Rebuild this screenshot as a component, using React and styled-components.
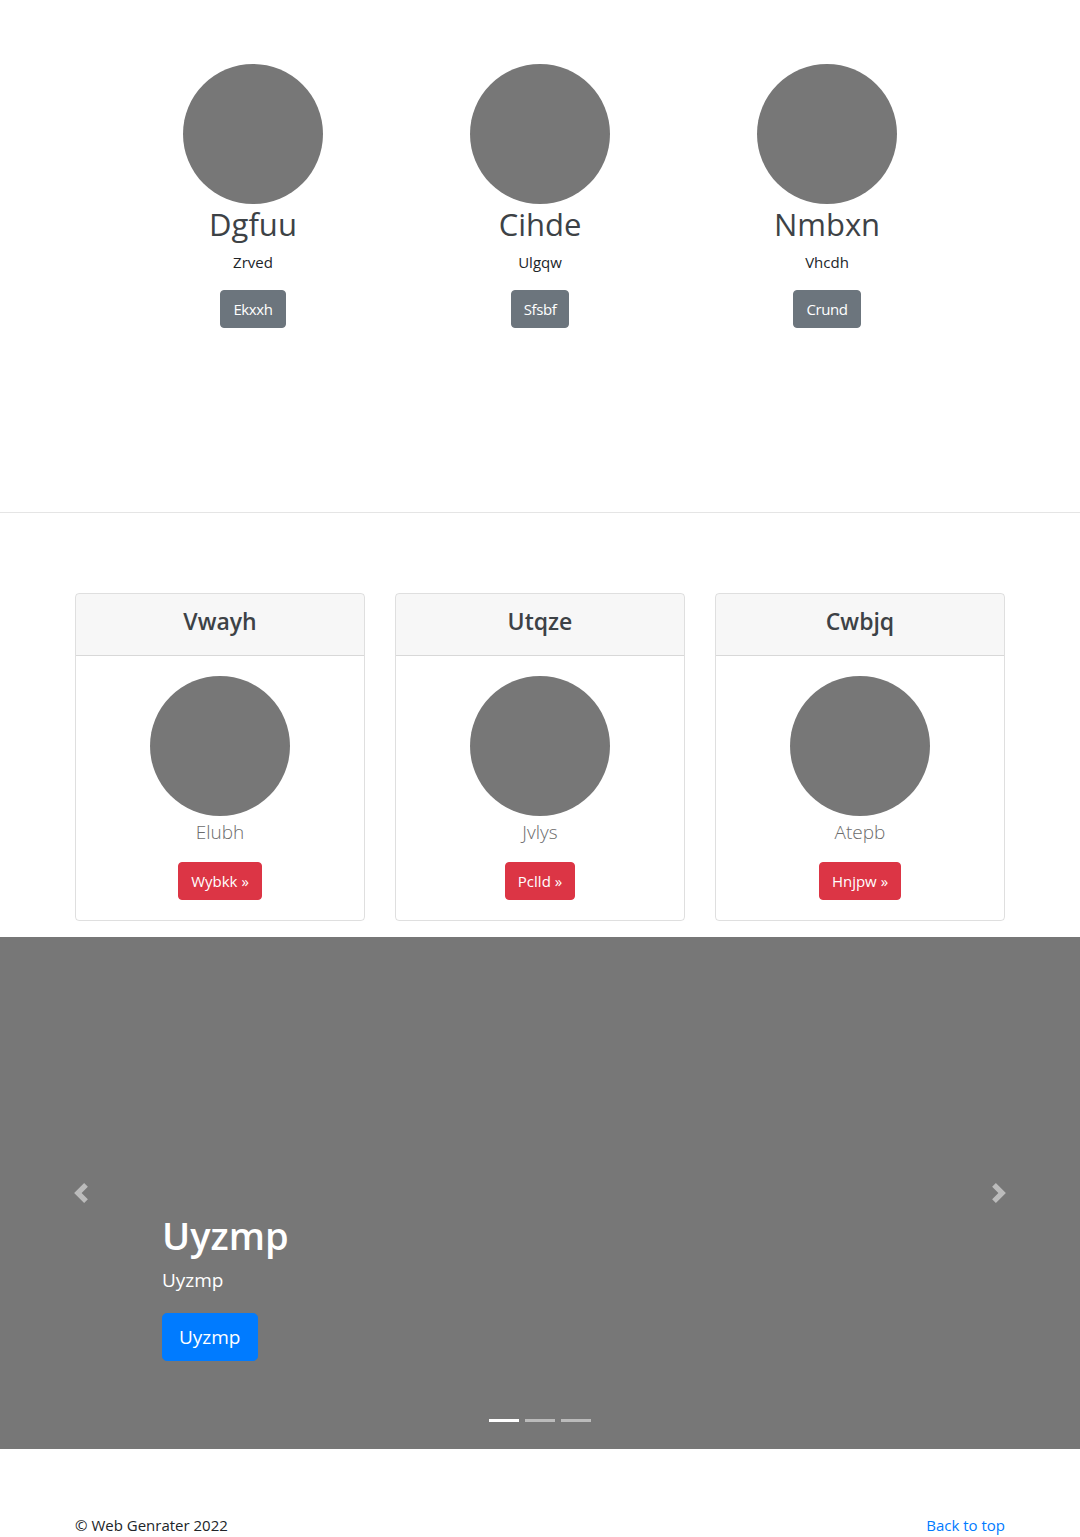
import styled, { createGlobalStyle } from 'styled-components'

const GlobalStyle = createGlobalStyle`
  body {
    margin: 0;
    font-family: 'Open Sans', 'Noto Sans', sans-serif;
    font-size: 16px;
    line-height: 1.5;
    color: #212529;
    background: #fff;
  }
  * {
    box-sizing: border-box;
  }
`

const features = [
  { title: 'Dgfuu', text: 'Zrved', btn: 'Ekxxh' },
  { title: 'Cihde', text: 'Ulgqw', btn: 'Sfsbf' },
  { title: 'Nmbxn', text: 'Vhcdh', btn: 'Crund' },
]

const cards = [
  { title: 'Vwayh', text: 'Elubh', btn: 'Wybkk' },
  { title: 'Utqze', text: 'Jvlys', btn: 'Pclld' },
  { title: 'Cwbjq', text: 'Atepb', btn: 'Hnjpw' },
]

const ChevronLeft = () => (
  <svg width='20' height='20' viewBox='0 0 8 8' fill='#fff'>
    <path d='M5.25 0l-4 4 4 4 1.5-1.5L4.25 4l2.5-2.5L5.25 0z' />
  </svg>
)

const ChevronRight = () => (
  <svg width='20' height='20' viewBox='0 0 8 8' fill='#fff'>
    <path d='M2.75 0l-1.5 1.5L3.75 4l-2.5 2.5L2.75 8l4-4-4-4z' />
  </svg>
)

const App = () => {
  return (
    <>
      <GlobalStyle />
      <FeatureSection>
        <FeatureRow>
          {features.map((f) => (
            <Feature key={f.title}>
              <Circle />
              <FeatureTitle>{f.title}</FeatureTitle>
              <FeatureText>{f.text}</FeatureText>
              <Button variant='secondary'>{f.btn}</Button>
            </Feature>
          ))}
        </FeatureRow>
      </FeatureSection>

      <CardSection>
        {cards.map((c) => (
          <Card key={c.title}>
            <CardHeader>
              <h4>{c.title}</h4>
            </CardHeader>
            <CardBody>
              <Circle />
              <Lead>{c.text}</Lead>
              <Button variant='danger'>{c.btn} &raquo;</Button>
            </CardBody>
          </Card>
        ))}
      </CardSection>

      <Carousel>
        <Control>
          <ChevronLeft />
        </Control>
        <Caption>
          <h1>Uyzmp</h1>
          <p>Uyzmp</p>
          <Button variant='primary' large>
            Uyzmp
          </Button>
        </Caption>
        <Control>
          <ChevronRight />
        </Control>
        <Indicators>
          <Indicator active />
          <Indicator />
          <Indicator />
        </Indicators>
      </Carousel>

      <Footer>
        <span>&copy; Web Genrater 2022</span>
        <a href='#'>Back to top</a>
      </Footer>
    </>
  )
}

const FeatureSection = styled.section`
  height: 513px;
  padding-top: 64px;
  border-bottom: 1px solid #e5e5e5;
`

const FeatureRow = styled.div`
  display: grid;
  grid-template-columns: repeat(3, 287px);
  justify-content: center;
`

const Feature = styled.div`
  display: flex;
  flex-direction: column;
  align-items: center;
  text-align: center;
`

const Circle = styled.div`
  width: 140px;
  height: 140px;
  border-radius: 50%;
  background: #777;
  flex-shrink: 0;
`

const FeatureTitle = styled.h2`
  margin: 2px 0 8px;
  font-size: 31px;
  font-weight: 400;
  line-height: 1.2;
  color: #3d4246;
`

const FeatureText = styled.p`
  margin: 0 0 16px;
  font-size: 15px;
`

const colors = {
  primary: '#007bff',
  secondary: '#6c757d',
  danger: '#dc3545',
}

const Button = styled.a`
  display: inline-block;
  background: ${(p) => colors[p.variant]};
  color: #fff;
  font-size: ${(p) => (p.large ? '19px' : '15px')};
  line-height: ${(p) => (p.large ? '30px' : '24px')};
  padding: ${(p) => (p.large ? '8px 16px' : '6px 12px')};
  border: 1px solid ${(p) => colors[p.variant]};
  border-radius: ${(p) => (p.large ? '4.8px' : '4px')};
  text-decoration: none;
  letter-spacing: ${(p) => (p.variant === 'secondary' ? '-0.4px' : '0')};
`

const CardSection = styled.section`
  width: 930px;
  margin: 80px auto 16px;
  display: grid;
  grid-template-columns: repeat(3, 1fr);
  gap: 30px;
`

const Card = styled.div`
  border: 1px solid rgba(0, 0, 0, 0.125);
  border-radius: 4px;
  overflow: hidden;
  text-align: center;
`

const CardHeader = styled.div`
  background: rgba(0, 0, 0, 0.03);
  border-bottom: 1px solid rgba(0, 0, 0, 0.125);
  padding: 13px 20px 12px;

  h4 {
    margin: 0 0 8px;
    font-size: 23px;
    font-weight: 600;
    line-height: 28px;
    color: #3d4246;
  }
`

const CardBody = styled.div`
  padding: 20px;
  display: flex;
  flex-direction: column;
  align-items: center;
`

const Lead = styled.p`
  margin: 1px 0 15px;
  font-size: 19px;
  font-weight: 300;
  line-height: 30px;
  color: #6c6c6c;
`

const Carousel = styled.section`
  position: relative;
  height: 512px;
  background: #777;
  display: grid;
  grid-template-columns: 15% 1fr 15%;
`

const Control = styled.div`
  display: flex;
  align-items: center;
  justify-content: center;
  opacity: 0.5;
`

const Caption = styled.div`
  display: flex;
  flex-direction: column;
  align-items: flex-start;
  justify-content: flex-end;
  padding-bottom: 88px;
  color: #fff;

  h1 {
    margin: 0 0 7px;
    font-size: 38px;
    font-weight: 600;
    line-height: 1.2;
  }

  p {
    margin: 0 0 19px;
    font-size: 19px;
    line-height: 1.5;
  }
`

const Indicators = styled.div`
  position: absolute;
  left: 0;
  right: 0;
  bottom: 27px;
  display: flex;
  justify-content: center;
  gap: 6px;
`

const Indicator = styled.span`
  width: 30px;
  height: 3px;
  background: #fff;
  opacity: ${(p) => (p.active ? 1 : 0.5)};
`

const Footer = styled.footer`
  width: 930px;
  margin: 64px auto 0;
  display: flex;
  justify-content: space-between;
  font-size: 15px;
  line-height: 24px;

  a {
    color: #007bff;
    text-decoration: none;
  }
`

export default App
